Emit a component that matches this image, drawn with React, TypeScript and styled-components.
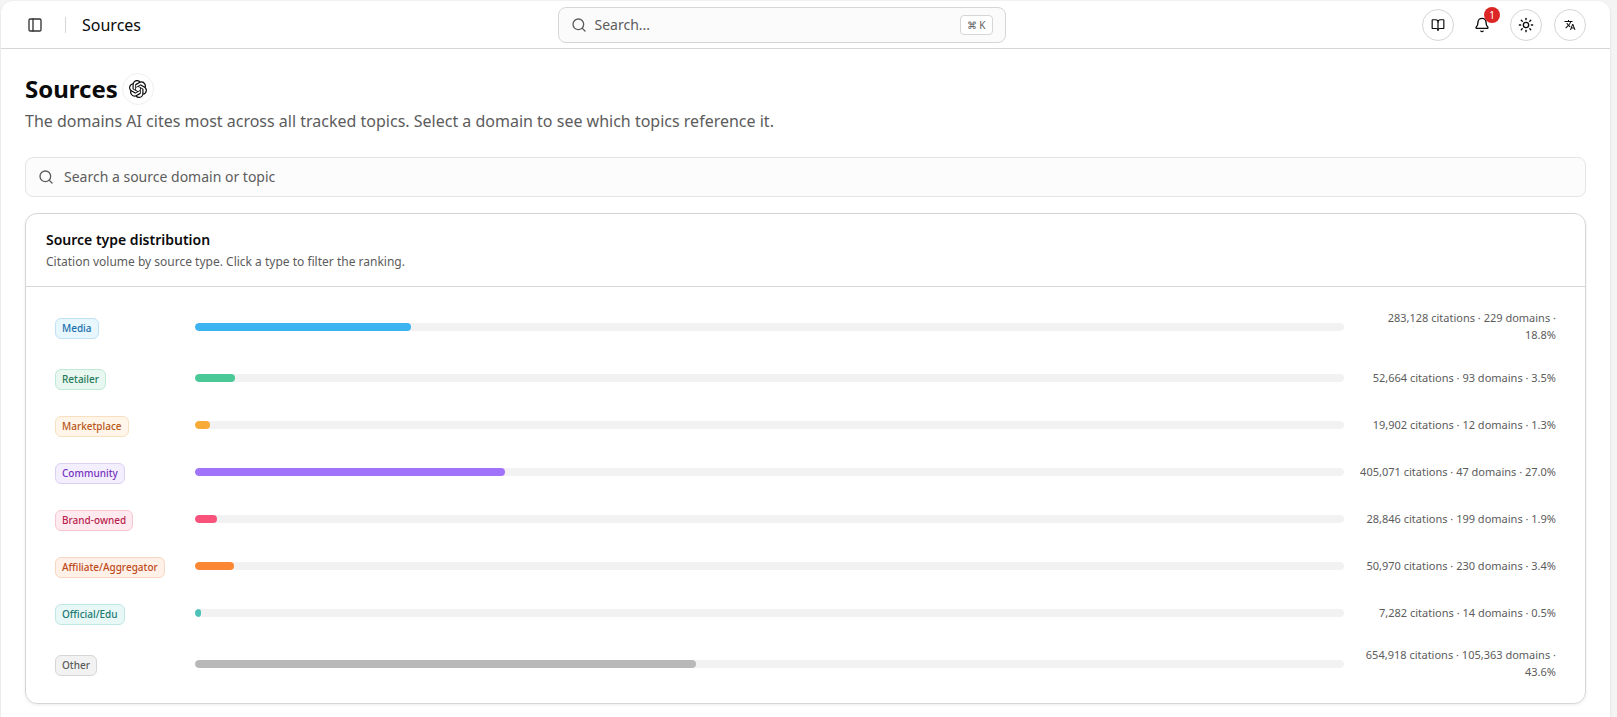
import React from "react";
import styled, { createGlobalStyle } from "styled-components";
import { Bell, BookOpen, PanelLeft, Search, Sun } from "lucide-react";
import { MdTranslate } from "react-icons/md";
import { SiOpenai } from "react-icons/si";

const GlobalStyle = createGlobalStyle`
  *, *::before, *::after { box-sizing: border-box; }
  body {
    margin: 0;
    background: #f4f4f4;
    color: #0a0a0a;
    font-family: "Noto Sans", sans-serif;
    font-size: 16px;
    line-height: 24px;
  }
  button, input { font: inherit; color: inherit; }
  button { cursor: pointer; }
  h1, h2, p, ul { margin: 0; padding: 0; }
`;

const Panel = styled.div`
  min-height: calc(100vh - 1px);
  margin: 1px 7px 0 1px;
  background: #ffffff;
  border-radius: 12px 12px 0 0;
  box-shadow: 0 1px 3px rgba(0, 0, 0, 0.1);
`;

const TopBar = styled.header`
  display: flex;
  align-items: center;
  height: 48px;
  padding: 0 24px 0 20px;
  border-bottom: 1px solid #d6d6d6;
`;

const IconButton = styled.button<{ $outlined?: boolean; $size?: number }>`
  position: relative;
  display: inline-flex;
  flex: none;
  align-items: center;
  justify-content: center;
  width: ${(p) => p.$size ?? 32}px;
  height: ${(p) => p.$size ?? 32}px;
  padding: 0;
  border: 1px solid ${(p) => (p.$outlined ? "#d6d6d6" : "transparent")};
  border-radius: 50%;
  background: transparent;
`;

const Divider = styled.span`
  width: 1px;
  height: 16px;
  margin: 0 16px;
  background: #d6d6d6;
`;

const BarTitle = styled.span`
  font-size: 16px;
`;

const SearchSlot = styled.div`
  display: flex;
  flex: 1;
  justify-content: center;
`;

const GlobalSearch = styled.button`
  display: flex;
  align-items: center;
  gap: 8px;
  width: 100%;
  max-width: 448px;
  height: 36px;
  padding: 0 12px;
  border: 1px solid #d6d6d6;
  border-radius: 8px;
  background: #fbfbfb;
  color: #5c5c5c;
  font-size: 14px;
  text-align: left;
`;

const GrowText = styled.span`
  flex: 1;
`;

const Shortcut = styled.kbd`
  display: inline-flex;
  align-items: center;
  gap: 2px;
  height: 20px;
  padding: 0 6px;
  border: 1px solid #d6d6d6;
  border-radius: 4px;
  background: #ffffff;
  font-family: "Noto Sans", sans-serif;
  font-size: 10px;
`;

const Actions = styled.div`
  display: flex;
  gap: 12px;
`;

const Count = styled.span`
  position: absolute;
  top: -3px;
  right: -3px;
  width: 16px;
  height: 16px;
  border-radius: 50%;
  background: #dc2626;
  color: #ffffff;
  font-size: 10px;
  line-height: 16px;
  text-align: center;
`;

const Content = styled.main`
  display: flex;
  flex-direction: column;
  gap: 16px;
  padding: 24px;
`;

const Heading = styled.div`
  display: flex;
  align-items: center;
  gap: 4px;
`;

const PageTitle = styled.h1`
  font-size: 24px;
  font-weight: 700;
  line-height: 32px;
`;

const Provider = styled.span`
  display: inline-flex;
  align-items: center;
  justify-content: center;
  width: 32px;
  height: 32px;
  border: 1px solid #efefef;
  border-radius: 50%;
`;

const Lead = styled.p`
  margin: 4px 0 8px;
  color: #5c5c5c;
`;

const DomainSearch = styled.label`
  display: flex;
  align-items: center;
  gap: 10px;
  height: 40px;
  padding: 0 12px;
  border: 1px solid #e5e5e5;
  border-radius: 8px;
  background: #fcfcfc;
  color: #5c5c5c;
`;

const DomainInput = styled.input`
  flex: 1;
  min-width: 0;
  padding: 0;
  border: 0;
  outline: 0;
  background: transparent;
  font-size: 14px;
  &::placeholder { color: #5c5c5c; opacity: 1; }
`;

const Card = styled.section`
  border: 1px solid #d6d6d6;
  border-radius: 12px;
  box-shadow: 0 1px 3px rgba(0, 0, 0, 0.08);
`;

const CardHeader = styled.div`
  padding: 16px 20px;
  border-bottom: 1px solid #d6d6d6;
`;

const CardTitle = styled.h2`
  font-size: 14px;
  font-weight: 600;
  line-height: 20px;
`;

const CardNote = styled.p`
  margin-top: 4px;
  color: #5c5c5c;
  font-size: 12px;
  line-height: 16px;
`;

const TypeList = styled.ul`
  display: flex;
  flex-direction: column;
  gap: 7px;
  padding: 16px 20px 15px;
  list-style: none;
`;

const TypeRow = styled.button`
  display: grid;
  grid-template-columns: 128px 1fr 200px;
  gap: 12px;
  align-items: center;
  width: 100%;
  min-height: 40px;
  padding: 6px 8px;
  border: 1px solid transparent;
  border-radius: 8px;
  background: transparent;
  text-align: left;
`;

type Tone = { text: string; fill: string; line: string; bar: string };

const TypeBadge = styled.span<{ $tone: Tone }>`
  justify-self: start;
  margin-top: 3px;
  padding: 0 6px;
  border: 1px solid ${(p) => p.$tone.line};
  border-radius: 6px;
  background: ${(p) => p.$tone.fill};
  color: ${(p) => p.$tone.text};
  font-size: 10px;
  font-weight: 500;
  line-height: 19px;
  white-space: nowrap;
`;

const Track = styled.span`
  height: 8px;
  overflow: hidden;
  border-radius: 4px;
  background: #f2f2f2;
`;

const Fill = styled.span<{ $tone: Tone }>`
  display: block;
  height: 100%;
  border-radius: 4px;
  background: ${(p) => p.$tone.bar};
`;

const Stats = styled.span`
  margin: -1px 0 1px;
  color: #5c5c5c;
  font-size: 11px;
  line-height: 17px;
  text-align: right;
`;

const types: { name: string; citations: string; domains: string; share: number; tone: Tone }[] = [
  { name: "Media", citations: "283,128", domains: "229", share: 18.8, tone: { text: "#1a6fab", fill: "#e8f6fe", line: "#bfe2f5", bar: "#3db4f2" } },
  { name: "Retailer", citations: "52,664", domains: "93", share: 3.5, tone: { text: "#267a57", fill: "#e8f8f1", line: "#c0e8d7", bar: "#4ac997" } },
  { name: "Marketplace", citations: "19,902", domains: "12", share: 1.3, tone: { text: "#b8581a", fill: "#fff5e8", line: "#f8dfc0", bar: "#f8ab37" } },
  { name: "Community", citations: "405,071", domains: "47", share: 27, tone: { text: "#7633bf", fill: "#f4effe", line: "#ddd0f5", bar: "#a173fb" } },
  { name: "Brand-owned", citations: "28,846", domains: "199", share: 1.9, tone: { text: "#b81f50", fill: "#ffebef", line: "#f6c6d1", bar: "#f9527b" } },
  { name: "Affiliate/Aggregator", citations: "50,970", domains: "230", share: 3.4, tone: { text: "#bd4a1c", fill: "#fff1e8", line: "#f8d6bf", bar: "#fb8735" } },
  { name: "Official/Edu", citations: "7,282", domains: "14", share: 0.5, tone: { text: "#207a74", fill: "#e8f8f6", line: "#c0e7e2", bar: "#4cc3b6" } },
  { name: "Other", citations: "654,918", domains: "105,363", share: 43.6, tone: { text: "#5c5c5c", fill: "#f2f2f2", line: "#d6d6d6", bar: "#b8b8b8" } },
];

export default function App() {
  return (
    <>
      <GlobalStyle />
      <Panel>
        <TopBar>
          <IconButton $size={28} aria-label="Toggle sidebar"><PanelLeft size={16} color="#333333" /></IconButton>
          <Divider />
          <BarTitle>Sources</BarTitle>
          <SearchSlot>
            <GlobalSearch>
              <Search size={16} />
              <GrowText>Search...</GrowText>
              <Shortcut><span>⌘</span><span>K</span></Shortcut>
            </GlobalSearch>
          </SearchSlot>
          <Actions>
            <IconButton $outlined aria-label="Documentation"><BookOpen size={14} /></IconButton>
            <IconButton aria-label="Notifications"><Bell size={16} /><Count>1</Count></IconButton>
            <IconButton $outlined aria-label="Theme"><Sun size={16} /></IconButton>
            <IconButton $outlined aria-label="Language"><MdTranslate size={12} /></IconButton>
          </Actions>
        </TopBar>
        <Content>
          <div>
            <Heading>
              <PageTitle>Sources</PageTitle>
              <Provider><SiOpenai size={18} /></Provider>
            </Heading>
            <Lead>The domains AI cites most across all tracked topics. Select a domain to see which topics reference it.</Lead>
          </div>
          <DomainSearch>
            <Search size={16} />
            <DomainInput type="text" placeholder="Search a source domain or topic" aria-label="Search a source domain or topic" />
          </DomainSearch>
          <Card>
            <CardHeader>
              <CardTitle>Source type distribution</CardTitle>
              <CardNote>Citation volume by source type. Click a type to filter the ranking.</CardNote>
            </CardHeader>
            <TypeList>
              {types.map((t) => (
                <li key={t.name}>
                  <TypeRow>
                    <TypeBadge $tone={t.tone}>{t.name}</TypeBadge>
                    <Track><Fill $tone={t.tone} style={{ width: `${t.share}%` }} /></Track>
                    <Stats>{`${t.citations} citations · ${t.domains} domains · ${t.share.toFixed(1)}%`}</Stats>
                  </TypeRow>
                </li>
              ))}
            </TypeList>
          </Card>
        </Content>
      </Panel>
    </>
  );
}
